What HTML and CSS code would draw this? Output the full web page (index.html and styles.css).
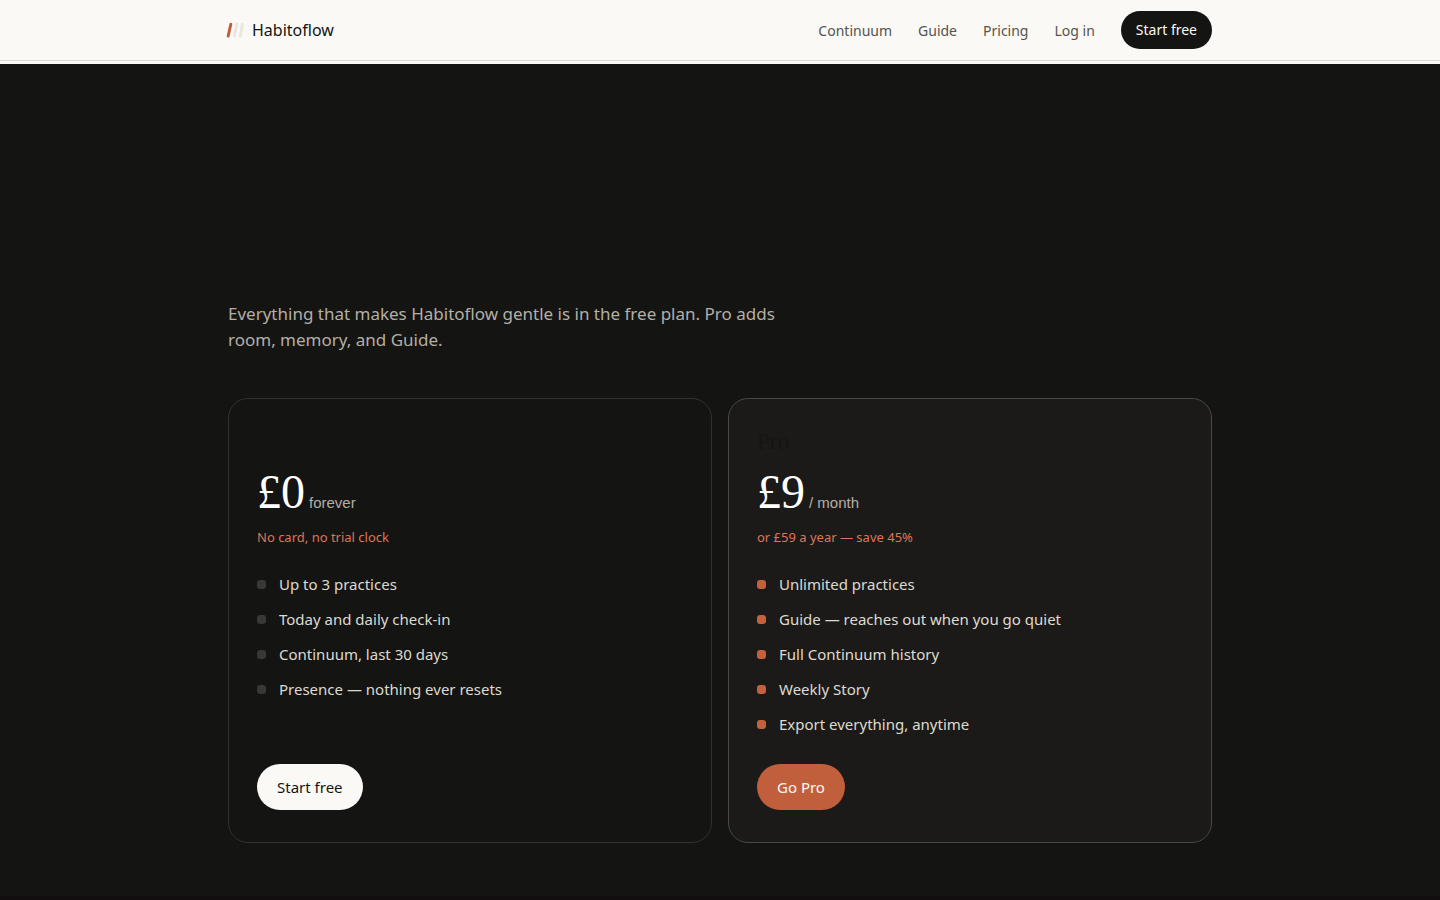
FILE: index.html
```html
<!DOCTYPE html>
<html lang="en">
<head>
  <meta charset="UTF-8">
  <title>Habitoflow – Pricing</title>
  <meta name="viewport" content="width=device-width, initial-scale=1.0">
  <link rel="stylesheet" href="styles.css">
</head>
<body>
<header class="site-header">
  <div class="wrap header-row">
    <a href="#" class="brand">
      <svg class="brand-mark" width="18" height="16" viewBox="0 0 18 16" fill="none" stroke-width="3" stroke-linecap="round" aria-hidden="true">
        <path d="M2.2 14 4.8 2.2" stroke="#c15f3c"/>
        <path d="M8.3 14 10.8 2.2" stroke="#e9e6df"/>
        <path d="M14.2 14 16.4 2.2" stroke="#e9e6df"/>
      </svg>
      Habitoflow
    </a>
    <nav class="nav">
      <a href="#continuum">Continuum</a>
      <a href="#guide">Guide</a>
      <a href="#pricing">Pricing</a>
      <a href="#login">Log in</a>
      <a href="#start" class="btn btn-small">Start free</a>
    </nav>
  </div>
</header>

<main class="pricing" id="pricing">
  <div class="wrap">
    <p class="lead">Everything that makes Habitoflow gentle is in the free plan. Pro adds room, memory, and Guide.</p>

    <div class="plans">
      <!-- free plan -->
      <section class="plan">
        <h2>Free</h2>
        <div class="price"><span>£0</span> <small>forever</small></div>
        <p class="note">No card, no trial clock</p>
        <ul class="features">
          <li>Up to 3 practices</li>
          <li>Today and daily check-in</li>
          <li>Continuum, last 30 days</li>
          <li>Presence — nothing ever resets</li>
        </ul>
        <a href="#start" class="btn btn-light">Start free</a>
      </section>

      <!-- pro plan -->
      <section class="plan plan-pro">
        <h2>Pro</h2>
        <div class="price"><span>£9</span> <small>/ month</small></div>
        <p class="note">or £59 a year — save 45%</p>
        <ul class="features">
          <li>Unlimited practices</li>
          <li>Guide — reaches out when you go quiet</li>
          <li>Full Continuum history</li>
          <li>Weekly Story</li>
          <li>Export everything, anytime</li>
        </ul>
        <a href="#pro" class="btn btn-accent">Go Pro</a>
      </section>
    </div>
  </div>
</main>
</body>
</html>
```

FILE: styles.css
```css
* { box-sizing: border-box; }
body {
  margin: 0;
  font-family: "Noto Sans", sans-serif;
  font-size: 16px;
  color: #141412;
  background: #fbf9f5;
}
a {
  color: inherit;
  text-decoration: none;
}
.wrap {
  max-width: 1032px;
  margin: 0 auto;
  padding: 0 24px;
}

/* header */
.site-header {
  border-bottom: 1px solid #dcd8d0;
  margin-bottom: 3px;
}
.header-row {
  display: flex;
  align-items: center;
  justify-content: space-between;
  height: 60px;
}
.brand {
  display: flex;
  align-items: center;
  gap: 8px;
  font-size: 16px;
}
.brand-mark {
  margin-left: -2px;
}
.nav {
  display: flex;
  align-items: center;
  gap: 26px;
  font-size: 14px;
  color: #55534e;
}

/* buttons */
.btn {
  display: inline-block;
  padding: 12px 20px;
  border-radius: 23px;
  font-size: 15px;
  line-height: 22px;
}
.btn-small {
  padding: 8px 15px;
  font-size: 14px;
  background: #141412;
  color: #fbf9f5;
}
.btn-light {
  background: #fbf9f5;
  color: #141412;
}
.btn-accent {
  background: #c15f3c;
  color: #fbf9f5;
}

/* pricing */
.pricing {
  padding: 237px 0 53px;
  background: #141412;
  border-bottom: 4px solid #120e10;
}
.lead {
  max-width: 560px;
  margin: 0 0 45px;
  font-size: 17px;
  line-height: 26px;
  color: #b3afa6;
}
.plans {
  display: grid;
  grid-template-columns: 1fr 1fr;
  gap: 16px;
}
.plan {
  display: flex;
  flex-direction: column;
  align-items: flex-start;
  padding: 28px 28px 32px;
  border: 1px solid #33312e;
  border-radius: 20px;
}
.plan-pro {
  background: #1c1a18;
  border-color: #4a4744;
}
.plan h2 {
  margin: 0 0 8px;
  font-family: "Liberation Serif", serif;
  font-size: 23px;
  font-weight: 400;
  line-height: 30px;
  color: #141412;
}
.price {
  display: flex;
  align-items: baseline;
  gap: 4px;
  font-family: "Liberation Serif", serif;
  font-size: 48px;
  line-height: 54px;
  color: #fff;
}
.price small {
  font-family: "Liberation Sans", sans-serif;
  font-size: 15px;
  line-height: 18px;
  color: #b3afa6;
}
.note {
  margin: 8px 0 25px;
  font-size: 13px;
  line-height: 20px;
  color: #dc7657;
}
.features {
  display: grid;
  gap: 10px;
  margin: 0 0 27px;
  padding: 0;
  list-style: none;
  font-size: 15px;
  line-height: 25px;
  color: #dedad1;
}
.features li {
  display: flex;
  align-items: center;
  gap: 13px;
}
.features li::before {
  content: "";
  width: 9px;
  height: 9px;
  border-radius: 3px;
  background: #3a3835;
}
.plan-pro .features li::before {
  background: #c4603c;
}
.plan .btn {
  margin-top: auto;
}
```
